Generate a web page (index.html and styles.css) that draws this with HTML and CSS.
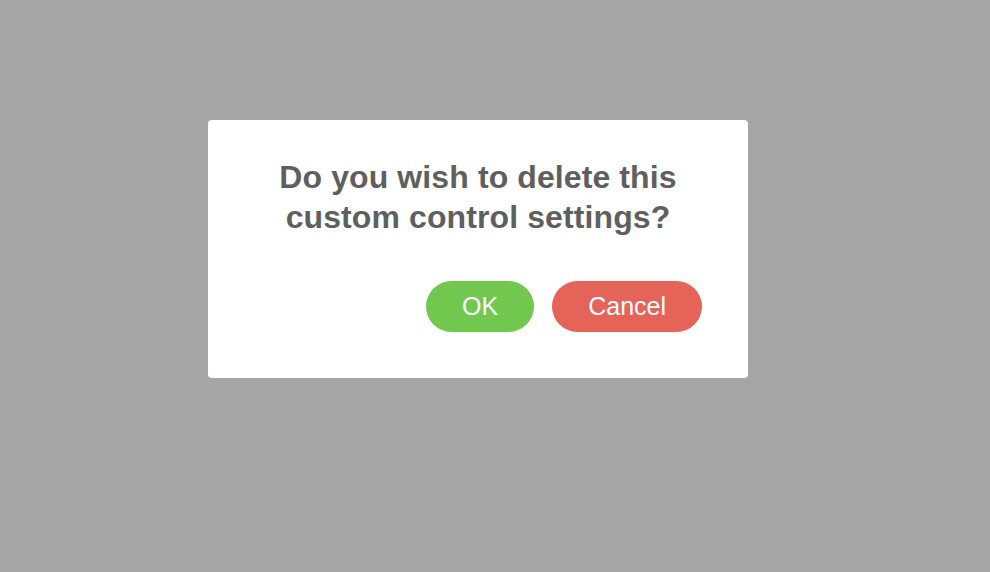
FILE: index.html
```html
<!DOCTYPE html>
<html>
<head>
<meta charset="utf-8">
<link rel="stylesheet" href="styles.css">
</head>
<body>
<div class="overlay">
  <div class="dialog">
    <h1 class="title">Do you wish to delete this custom control settings?</h1>
    <div class="actions">
      <button class="btn btn-ok">OK</button>
      <button class="btn btn-cancel">Cancel</button>
    </div>
  </div>
</div>
</body>
</html>
```
FILE: styles.css
```css
html, body {
  margin: 0;
  padding: 0;
  height: 100%;
}
body {
  background: #a5a5a5;
  font-family: "Liberation Sans", Arial, sans-serif;
}
.overlay {
  height: 100%;
  display: flex;
  align-items: flex-start;
  justify-content: flex-start;
  padding: 120px 0 0 208px;
  box-sizing: border-box;
}
.dialog {
  width: 540px;
  box-sizing: border-box;
  background: #ffffff;
  border-radius: 4px;
  padding: 37px 46px 46px;
}
.title {
  margin: 0;
  font-size: 32px;
  line-height: 40px;
  font-weight: bold;
  color: #5f5f5f;
  text-align: center;
  letter-spacing: 0.1px;
}
.actions {
  display: flex;
  justify-content: flex-end;
  gap: 18px;
  margin-top: 44px;
}
.btn {
  height: 51px;
  border: none;
  border-radius: 26px;
  padding: 0 36px;
  font-family: "Liberation Sans", Arial, sans-serif;
  font-size: 25px;
  color: #ffffff;
  cursor: pointer;
}
.btn-ok {
  background: #72c84f;
}
.btn-cancel {
  background: #e4645a;
}
```
